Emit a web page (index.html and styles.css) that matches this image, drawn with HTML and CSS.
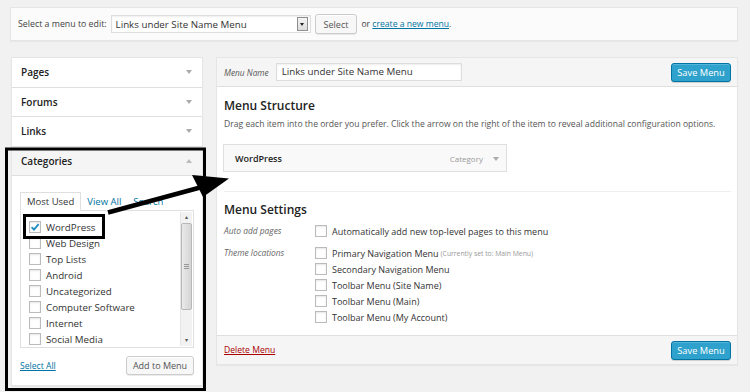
FILE: index.html
```html
<!DOCTYPE html>
<html lang="en">
<head>
    <meta charset="UTF-8">
    <title>Menus</title>
    <link rel="stylesheet" href="styles.css">
</head>
<body>
    <div class="manage-menus">
        <span class="select-label">Select a menu to edit:</span>
        <div class="fake-select">
            <span>Links under Site Name Menu</span>
            <span class="select-arrow"></span>
        </div>
        <button class="btn">Select</button>
        <span class="or-create">or <a href="#">create a new menu</a>.</span>
    </div>

    <div class="columns">
        <div class="sidebar">
            <div class="acc-title">Pages <span class="caret"></span></div>
            <div class="acc-title">Forums <span class="caret"></span></div>
            <div class="acc-title">Links <span class="caret"></span></div>
            <div class="acc-title open">Categories <span class="caret up"></span></div>
            <div class="acc-body">
                <div class="tabs">
                    <span class="tab active">Most Used</span>
                    <a href="#" class="tab">View All</a>
                    <a href="#" class="tab">Search</a>
                </div>
                <div class="list-box">
                    <ul class="cat-list">
                        <li><span class="check checked"><svg viewBox="0 0 12 12" width="12" height="12"><path d="M2.6 6.2 L5 8.6 L9.6 3.2" fill="none" stroke="#1e8cbe" stroke-width="1.8"/></svg></span>WordPress</li>
                        <li><span class="check"></span>Web Design</li>
                        <li><span class="check"></span>Top Lists</li>
                        <li><span class="check"></span>Android</li>
                        <li><span class="check"></span>Uncategorized</li>
                        <li><span class="check"></span>Computer Software</li>
                        <li><span class="check"></span>Internet</li>
                        <li><span class="check"></span>Social Media</li>
                    </ul>
                    <div class="scrollbar">
                        <div class="sb-arrow">&#9652;</div>
                        <div class="sb-thumb"><span class="grip"></span></div>
                        <div class="sb-track"></div>
                        <div class="sb-arrow">&#9662;</div>
                    </div>
                </div>
                <div class="cat-actions">
                    <a href="#">Select All</a>
                    <button class="btn add-btn">Add to Menu</button>
                </div>
            </div>
        </div>

        <div class="menu-edit">
            <div class="menu-header">
                <label class="menu-name-label">Menu Name</label>
                <div class="text-input">Links under Site Name Menu</div>
                <button class="btn-primary">Save Menu</button>
            </div>
            <div class="menu-body">
                <h3>Menu Structure</h3>
                <p class="drag-info">Drag each item into the order you prefer. Click the arrow on the right of the item to reveal additional configuration options.</p>
                <div class="menu-item">
                    <span class="item-title">WordPress</span>
                    <span class="item-type">Category <span class="caret"></span></span>
                </div>
                <hr>
                <h3>Menu Settings</h3>
                <div class="settings">
                    <div class="set-label">Auto add pages</div>
                    <div class="set-options">
                        <div class="opt"><span class="check"></span>Automatically add new top-level pages to this menu</div>
                    </div>
                    <div class="set-label theme">Theme locations</div>
                    <div class="set-options theme">
                        <div class="opt"><span class="check"></span>Primary Navigation Menu <small>(Currently set to: Main Menu)</small></div>
                        <div class="opt"><span class="check"></span>Secondary Navigation Menu</div>
                        <div class="opt"><span class="check"></span>Toolbar Menu (Site Name)</div>
                        <div class="opt"><span class="check"></span>Toolbar Menu (Main)</div>
                        <div class="opt"><span class="check"></span>Toolbar Menu (My Account)</div>
                    </div>
                </div>
            </div>
            <div class="menu-footer">
                <a href="#" class="delete">Delete Menu</a>
                <button class="btn-primary">Save Menu</button>
            </div>
        </div>
    </div>

    <!-- annotation drawn over the screenshot -->
    <svg class="annotations" viewBox="0 0 750 392" width="750" height="392">
        <rect x="6.5" y="149" width="198" height="240.5" fill="none" stroke="#000" stroke-width="3"/>
        <rect x="24.5" y="215.5" width="79" height="22" fill="none" stroke="#000" stroke-width="3"/>
        <line x1="108" y1="212.5" x2="202" y2="187" stroke="#000" stroke-width="4.5"/>
        <polygon points="229,178.5 192,175 203,197" fill="#000"/>
    </svg>
</body>
</html>
```

FILE: styles.css
```css
body {
    margin: 0;
    background: #f1f1f1;
    font-family: "Open Sans", "DejaVu Sans", sans-serif;
    font-size: 9.75px;
    color: #444;
    position: relative;
    height: 392px;
    overflow: hidden;
}
a {
    color: #0074a2;
}
.manage-menus {
    margin: 7px 12px 0 10px;
    height: 34px;
    box-sizing: border-box;
    border: 1px solid #e5e5e5;
    background: #fbfbfb;
    box-shadow: 0 1px 1px rgba(0,0,0,.04);
    display: flex;
    align-items: center;
    padding: 0 7px;
}
.select-label {
    font-size: 8.8px;
    color: #444;
    margin-right: 4px;
}
.fake-select {
    width: 200px;
    height: 18px;
    box-sizing: border-box;
    border: 1px solid #ddd;
    background: #fff;
    box-shadow: inset 0 1px 2px rgba(0,0,0,.07);
    display: flex;
    align-items: center;
    justify-content: space-between;
    padding: 0 2px 0 4px;
    color: #333;
}
.select-arrow {
    width: 11px;
    height: 14px;
    box-sizing: border-box;
    border: 1px solid #8f8f8f;
    background: linear-gradient(#f4f4f4, #dcdcdc);
    position: relative;
}
.select-arrow::after {
    content: "";
    position: absolute;
    left: 2px;
    top: 5px;
    border-left: 2.5px solid transparent;
    border-right: 2.5px solid transparent;
    border-top: 3px solid #222;
}
.btn {
    font-family: inherit;
    font-size: 9px;
    color: #555;
    background: #f7f7f7;
    border: 1px solid #ccc;
    border-radius: 3px;
    box-shadow: inset 0 1px 0 #fff, 0 1px 0 rgba(0,0,0,.08);
    height: 20px;
    padding: 0 8px;
    margin-left: 4px;
}
.or-create {
    font-size: 8.6px;
    margin-left: 4px;
}
.columns {
    display: flex;
    align-items: flex-start;
    margin: 16px 12px 0 11px;
    gap: 13px;
}
.sidebar {
    width: 192px;
    box-sizing: border-box;
    border: 1px solid #e5e5e5;
    background: #fff;
    box-shadow: 0 1px 1px rgba(0,0,0,.04);
}
.acc-title {
    height: 29.5px;
    box-sizing: border-box;
    border-bottom: 1px solid #dfdfdf;
    display: flex;
    align-items: center;
    justify-content: space-between;
    padding: 0 10px 0 9px;
    font-weight: 600;
    font-size: 10px;
    color: #222;
}
.acc-title.open {
    background: #f5f5f5;
}
.caret {
    display: inline-block;
    width: 0;
    height: 0;
    border-left: 3px solid transparent;
    border-right: 3px solid transparent;
    border-top: 4px solid #aaa;
}
.caret.up {
    border-top: none;
    border-bottom: 4px solid #bbb;
}
.acc-body {
    padding: 16px 8px 10px 8px;
}
.tabs {
    display: flex;
    align-items: flex-end;
    height: 18px;
}
.tab {
    font-size: 9.5px;
    text-decoration: none;
    padding: 0 6px;
    line-height: 17px;
}
.tab.active {
    border: 1px solid #dfdfdf;
    border-bottom-color: #fff;
    background: #fff;
    color: #333;
    margin-bottom: -1px;
    position: relative;
}
.list-box {
    display: flex;
    height: 138px;
    box-sizing: border-box;
    border: 1px solid #dfdfdf;
    background: #fff;
}
.cat-list {
    flex: 1;
    list-style: none;
    margin: 0;
    padding: 8px 0 0 8px;
    overflow: hidden;
}
.cat-list li {
    display: flex;
    align-items: center;
    height: 16px;
    color: #333;
}
.check {
    display: inline-block;
    width: 12px;
    height: 12px;
    box-sizing: border-box;
    border: 1px solid #bbb;
    background: #fff;
    box-shadow: inset 0 1px 2px rgba(0,0,0,.1);
    margin-right: 5px;
    flex-shrink: 0;
    position: relative;
}
.check svg {
    position: absolute;
    left: -1px;
    top: -1px;
}
.scrollbar {
    width: 11px;
    margin: 1px 1px 1px 0;
    display: flex;
    flex-direction: column;
    background: #f2f2f2;
    border-left: 1px solid #e6e6e6;
}
.sb-arrow {
    height: 11px;
    font-size: 6px;
    line-height: 11px;
    text-align: center;
    color: #555;
}
.sb-thumb {
    height: 87px;
    box-sizing: border-box;
    border: 1px solid #b8b8b8;
    border-radius: 2px;
    background: linear-gradient(90deg, #eaeaea, #d4d4d4);
    display: flex;
    align-items: center;
    justify-content: center;
}
.grip {
    width: 5px;
    height: 6px;
    background: repeating-linear-gradient(#999 0 1px, transparent 1px 2px);
}
.sb-track {
    flex: 1;
}
.cat-actions {
    display: flex;
    justify-content: space-between;
    align-items: center;
    margin-top: 8px;
}
.cat-actions a {
    font-size: 8.6px;
}
.add-btn {
    width: 68px;
    height: 19px;
    padding: 0;
    font-size: 9px;
}
.menu-edit {
    width: 522px;
    box-sizing: border-box;
    border: 1px solid #e5e5e5;
    background: #fff;
    box-shadow: 0 1px 1px rgba(0,0,0,.04);
}
.menu-header {
    height: 29px;
    box-sizing: border-box;
    background: #f5f5f5;
    border-bottom: 1px solid #dfdfdf;
    display: flex;
    align-items: center;
    padding: 0 6px 0 7px;
}
.menu-name-label {
    font-style: italic;
    font-size: 8.3px;
    color: #555;
    margin-right: 7px;
}
.text-input {
    width: 186px;
    height: 18px;
    box-sizing: border-box;
    border: 1px solid #ddd;
    background: #fff;
    box-shadow: inset 0 1px 2px rgba(0,0,0,.07);
    padding: 0 5px;
    line-height: 16px;
    font-size: 9.75px;
    color: #333;
}
.btn-primary {
    margin-left: auto;
    width: 60px;
    height: 19px;
    padding: 0;
    font-family: inherit;
    font-size: 9.3px;
    color: #fff;
    background: #2ea2cc;
    border: 1px solid #0074a2;
    border-radius: 3px;
    box-shadow: inset 0 1px 0 rgba(120,200,230,.5), 0 1px 0 rgba(0,0,0,.15);
}
.menu-body {
    padding: 11px 6px 10px 7px;
}
h3 {
    margin: 0;
    font-size: 12px;
    font-weight: 600;
    line-height: 16px;
    color: #222;
}
.drag-info {
    margin: 4px 0 0 0;
    font-size: 8.6px;
    line-height: 13px;
    color: #555;
}
.menu-item {
    width: 284px;
    height: 28px;
    box-sizing: border-box;
    margin: 13px 0 0 -1px;
    border: 1px solid #dfdfdf;
    background: #f9f9f9;
    display: flex;
    align-items: center;
    justify-content: space-between;
    padding: 0 7px 0 11px;
}
.item-title {
    font-weight: 600;
    font-size: 9px;
    color: #222;
}
.item-type {
    font-size: 8px;
    color: #999;
}
.item-type .caret {
    margin-left: 8px;
    vertical-align: middle;
}
hr {
    border: none;
    border-top: 1px solid #eee;
    margin: 19px 0 10px 0;
}
.settings {
    display: grid;
    grid-template-columns: 91px auto;
    margin-top: 5px;
}
.set-label {
    font-style: italic;
    font-size: 8.4px;
    color: #666;
    line-height: 16px;
}
.set-label.theme,
.set-options.theme {
    margin-top: 6px;
}
.opt {
    display: flex;
    align-items: center;
    height: 16px;
    font-size: 9px;
    color: #333;
}
.opt small {
    font-size: 6.8px;
    color: #999;
    margin-left: 2px;
}
.menu-footer {
    height: 29px;
    box-sizing: border-box;
    background: #f5f5f5;
    border-top: 1px solid #dfdfdf;
    display: flex;
    align-items: center;
    padding: 0 6px 0 7px;
}
.delete {
    color: #a00;
    font-size: 8.6px;
}
.annotations {
    position: absolute;
    left: 0;
    top: 0;
    pointer-events: none;
}
```
